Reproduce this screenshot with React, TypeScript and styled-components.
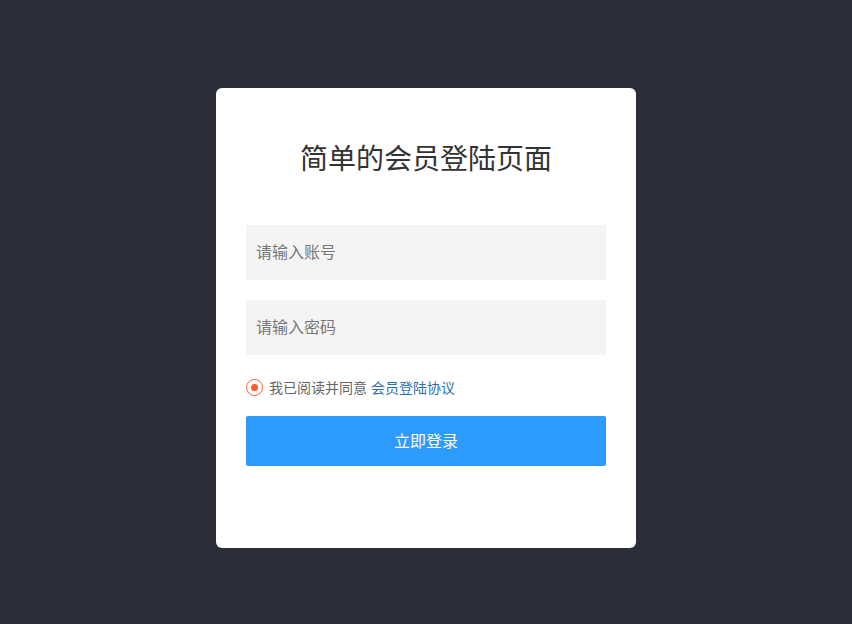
import React from "react";
import styled, { createGlobalStyle } from "styled-components";

const Global = createGlobalStyle`
  html, body { margin: 0; padding: 0; background: #2b2d38; }
  body { font-family: "Noto Sans CJK SC", "Noto Sans", sans-serif; }
  * { box-sizing: border-box; }
`;

const Page = styled.div`
  min-height: 624px;
  display: flex;
  justify-content: center;
  align-items: flex-start;
  padding-top: 88px;
  background: #2b2d38;
`;

const Card = styled.form`
  width: 420px;
  height: 460px;
  background: #fff;
  border-radius: 6px;
  padding: 48px 30px 0;
  display: flex;
  flex-direction: column;
`;

const Title = styled.h1`
  margin: 0 0 47px;
  font-size: 28px;
  line-height: 42px;
  font-weight: 400;
  color: #333;
  text-align: center;
`;

const Field = styled.input`
  display: block;
  width: 360px;
  height: 55px;
  border: none;
  outline: none;
  background: #f4f4f4;
  padding: 0 10px 3px;
  font-family: inherit;
  font-size: 16px;
  color: #333;
  margin-bottom: 20px;
  &::placeholder { color: #777; }
`;

const AgreeRow = styled.label`
  display: flex;
  align-items: center;
  gap: 6px;
  height: 24px;
  font-size: 14px;
  color: #666;
`;

const Radio = styled.span`
  width: 17px;
  height: 17px;
  border-radius: 50%;
  border: 1.5px solid #ff5a2c;
  display: flex;
  align-items: center;
  justify-content: center;
  &::after {
    content: "";
    width: 7px;
    height: 7px;
    border-radius: 50%;
    background: #ff5a2c;
  }
`;

const Link = styled.a`
  color: #2d6fb0;
  text-decoration: none;
  margin-left: 4px;
`;

const Submit = styled.button`
  margin-top: 17px;
  width: 360px;
  height: 50px;
  border: none;
  border-radius: 2px;
  background: #2d9bfd;
  color: #fff;
  font-family: inherit;
  font-size: 16px;
  padding: 0 0 2px;
  cursor: pointer;
`;

export default function App() {
  return (
    <>
      <Global />
      <Page>
        <Card onSubmit={(e) => e.preventDefault()}>
          <Title>简单的会员登陆页面</Title>
          <Field placeholder="请输入账号" />
          <Field type="password" placeholder="请输入密码" />
          <AgreeRow>
            <Radio />
            <span>
              我已阅读并同意<Link href="#">会员登陆协议</Link>
            </span>
          </AgreeRow>
          <Submit type="submit">立即登录</Submit>
        </Card>
      </Page>
    </>
  );
}
